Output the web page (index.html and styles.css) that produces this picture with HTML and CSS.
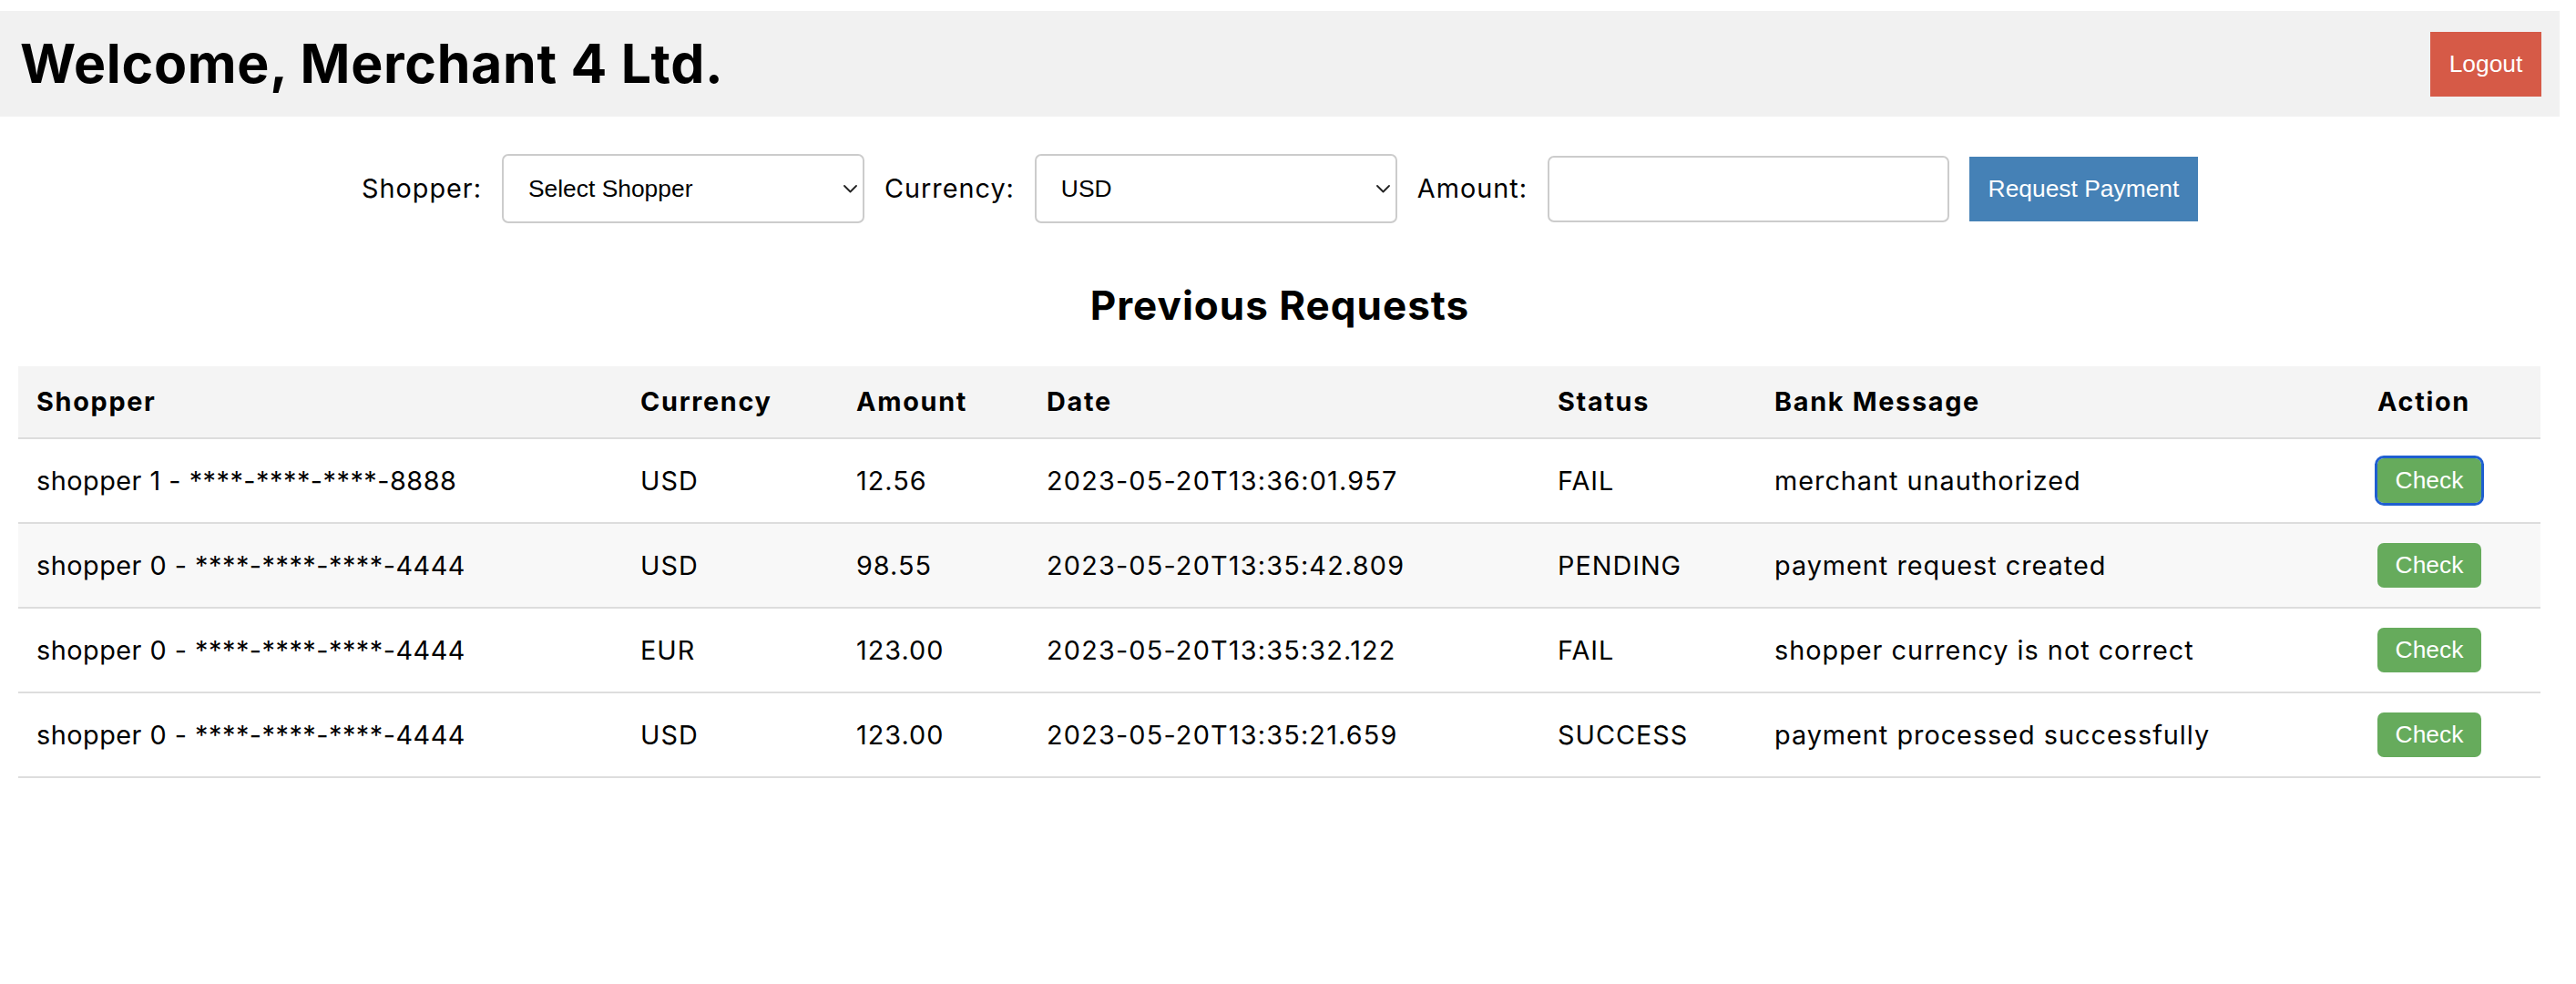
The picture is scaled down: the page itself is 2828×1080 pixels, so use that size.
FILE: index.html
```html
<!DOCTYPE html>
<html lang="en">
<head>
<meta charset="utf-8">
<title>Merchant Dashboard</title>
<link rel="stylesheet" href="styles.css">
</head>
<body>
<div class="page">
  <header class="topbar">
    <h1 class="title">Welcome, Merchant 4 Ltd.</h1>
    <button class="btn btn-logout">Logout</button>
  </header>

  <form class="request-form">
    <label class="field-label">Shopper:</label>
    <span class="select-wrap">
      <select class="select"><option>Select Shopper</option></select>
      <svg class="chevron" width="15" height="9" viewBox="0 0 15 9"><path d="M1 1 L7.5 7.5 L14 1" fill="none" stroke="#222" stroke-width="1.8" stroke-linecap="round" stroke-linejoin="round"/></svg>
    </span>
    <label class="field-label">Currency:</label>
    <span class="select-wrap">
      <select class="select"><option>USD</option></select>
      <svg class="chevron" width="15" height="9" viewBox="0 0 15 9"><path d="M1 1 L7.5 7.5 L14 1" fill="none" stroke="#222" stroke-width="1.8" stroke-linecap="round" stroke-linejoin="round"/></svg>
    </span>
    <label class="field-label">Amount:</label>
    <input class="amount-input" type="text">
    <button type="button" class="btn btn-request">Request Payment</button>
  </form>

  <h2 class="section-title">Previous Requests</h2>

  <table class="requests">
    <colgroup>
      <col class="c-shopper"><col class="c-currency"><col class="c-amount"><col class="c-date"><col class="c-status"><col class="c-msg"><col class="c-action">
    </colgroup>
    <thead>
      <tr><th>Shopper</th><th>Currency</th><th>Amount</th><th>Date</th><th>Status</th><th>Bank Message</th><th>Action</th></tr>
    </thead>
    <tbody>
      <tr>
        <td class="shopper">shopper 1 - ****-****-****-8888</td><td>USD</td><td>12.56</td><td class="num">2023-05-20T13:36:01.957</td><td>FAIL</td><td>merchant unauthorized</td>
        <td><button class="btn btn-check is-focused">Check</button></td>
      </tr>
      <tr class="striped">
        <td class="shopper">shopper 0 - ****-****-****-4444</td><td>USD</td><td>98.55</td><td class="num">2023-05-20T13:35:42.809</td><td>PENDING</td><td>payment request created</td>
        <td><button class="btn btn-check">Check</button></td>
      </tr>
      <tr>
        <td class="shopper">shopper 0 - ****-****-****-4444</td><td>EUR</td><td>123.00</td><td class="num">2023-05-20T13:35:32.122</td><td>FAIL</td><td>shopper currency is not correct</td>
        <td><button class="btn btn-check">Check</button></td>
      </tr>
      <tr>
        <td class="shopper">shopper 0 - ****-****-****-4444</td><td>USD</td><td>123.00</td><td class="num">2023-05-20T13:35:21.659</td><td>SUCCESS</td><td>payment processed successfully</td>
        <td><button class="btn btn-check">Check</button></td>
      </tr>
    </tbody>
  </table>
</div>
</body>
</html>
```
FILE: styles.css
```css
html, body {
  margin: 0;
  padding: 0;
  background: #ffffff;
}

body {
  font-family: Inter, "Noto Sans", sans-serif;
  color: #000;
  font-size: 28.8px;
}

.page {
  width: 2810px;
}

.topbar {
  margin-top: 12px;
  height: 116px;
  background: #f1f1f1;
  display: flex;
  align-items: center;
  justify-content: space-between;
  padding: 0 20px 0 22px;
  box-sizing: border-box;
}

.title {
  margin: 0;
  font-size: 59px;
  font-weight: 700;
  line-height: 1.2;
  letter-spacing: 0.7px;
}

.btn {
  font-family: "Liberation Sans", Arial, sans-serif;
  font-size: 26.4px;
  color: #fff;
  border: none;
  cursor: pointer;
  padding: 0;
}

.btn-logout {
  width: 122px;
  height: 71px;
  background: #d65a47;
}

.request-form {
  margin-top: 41px;
  height: 76px;
  display: flex;
  align-items: center;
  justify-content: center;
  gap: 22px;
}

.field-label {
  font-size: 28.8px;
  line-height: 1.2;
  letter-spacing: 1px;
}

.select-wrap {
  position: relative;
  display: block;
  width: 398px;
  height: 76px;
}

.select {
  appearance: none;
  -webkit-appearance: none;
  width: 100%;
  height: 100%;
  box-sizing: border-box;
  border: 2px solid #cccccc;
  border-radius: 7px;
  background: #fff;
  font-family: "Liberation Sans", Arial, sans-serif;
  font-size: 26.4px;
  color: #000;
  padding: 0 0 0 27px;
}

.chevron {
  position: absolute;
  right: 8px;
  top: 34px;
}

.amount-input {
  width: 441px;
  height: 73px;
  box-sizing: border-box;
  border: 2px solid #cccccc;
  border-radius: 7px;
  background: #fff;
  font-size: 24px;
  padding: 0 14px;
}

.btn-request {
  width: 251px;
  height: 71px;
  background: #4581b6;
}

.section-title {
  margin: 64px 0 0;
  font-size: 44px;
  font-weight: 700;
  line-height: 52px;
  text-align: center;
  letter-spacing: 1px;
}

.requests {
  margin: 41px 21px 0 20px;
  width: 2769px;
  table-layout: fixed;
  border-collapse: collapse;
}

.c-shopper { width: 663px; }
.c-currency { width: 237px; }
.c-amount { width: 209px; }
.c-date { width: 561px; }
.c-status { width: 238px; }
.c-msg { width: 662px; }
.c-action { width: 199px; }

.requests th,
.requests td {
  text-align: left;
  font-size: 28.8px;
  line-height: 35px;
  padding: 28px 20px;
  border-bottom: 2px solid #dddddd;
  white-space: nowrap;
  letter-spacing: 1px;
}

.requests td.num {
  letter-spacing: 1.2px;
}

.requests td.shopper {
  letter-spacing: 0.5px;
}

.requests th {
  font-weight: 700;
  padding: 21px 20px 22px;
  background: #f4f4f4;
  letter-spacing: 1.7px;
}

.requests tr.striped td {
  background: #f8f8f8;
}

.requests td:last-child {
  padding-top: 0;
  padding-bottom: 0;
  height: 91px;
}

.btn-check {
  display: block;
  width: 114px;
  height: 49px;
  background: #66ab5c;
  border-radius: 7px;
  letter-spacing: 0;
}

.btn-check.is-focused {
  outline: 3px solid #1f5fd0;
  outline-offset: 0;
}
```
